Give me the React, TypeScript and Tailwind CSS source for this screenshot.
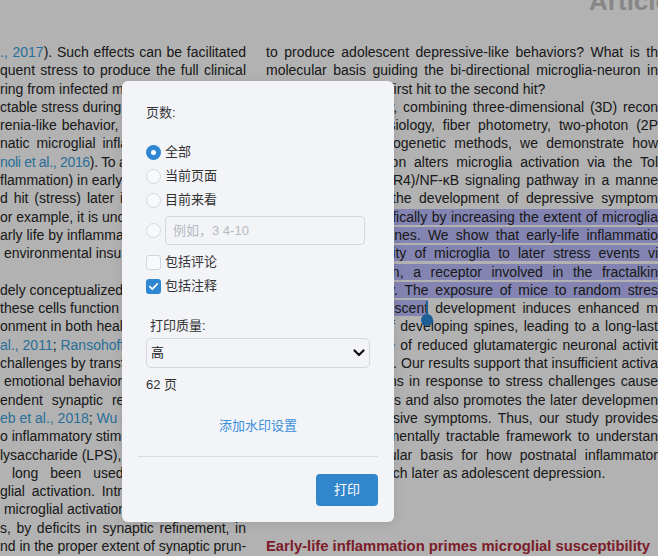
import React from "react";
import clsx from "clsx";

type Part = string | { text: string; kind: "link" | "mark" | "caret" };

interface Line {
  parts: Part[];
  justify?: boolean;
  extra?: string;
  noClip?: boolean;
}

const link = (text: string): Part => ({ text, kind: "link" });
const mark = (text: string): Part => ({ text, kind: "mark" });
const caret: Part = { text: "", kind: "caret" };

// left column: only the part left of the dialog is visible, so most lines are fragments
const leftLines: Line[] = [
  { parts: [link("., 2017"), "). Such effects can be facilitated"], justify: true },
  { parts: ["quent stress to produce the full clinical"], justify: true },
  { parts: ["ring from infected mothers and later"] },
  { parts: ["ctable stress during adolescence"] },
  { parts: ["renia-like behavior, and"], extra: "[word-spacing:1px]" },
  { parts: ["natic microglial inflammation"], extra: "[word-spacing:3px]" },
  { parts: [link("noli et al., 2016"), "). To address"], extra: "tracking-[-0.3px]" },
  { parts: ["flammation) in early life"] },
  { parts: ["d hit (stress) later in life"], extra: "[word-spacing:2px]" },
  { parts: ["or example, it is unclear"] },
  { parts: ["arly life by inflammation"] },
  { parts: ["\u00a0environmental insults"] },
  { parts: [] },
  { parts: ["dely conceptualized as"] },
  { parts: ["these cells function as"] },
  { parts: ["onment in both health"] },
  { parts: [link("al., 2011"), "; ", link("Ransohoff")] },
  { parts: ["challenges by transforming"] },
  { parts: ["\u00a0emotional behaviors"] },
  { parts: ["endent synaptic remodeling"], extra: "[word-spacing:5px]" },
  { parts: [link("eb et al., 2018"), "; ", link("Wu et al.")] },
  { parts: ["o inflammatory stimuli"] },
  { parts: ["lysaccharide (LPS),"] },
  { parts: ["\u00a0long been used in"], extra: "[word-spacing:8px]" },
  { parts: ["glial activation. Introducing"], extra: "[word-spacing:3px]" },
  { parts: ["\u00a0microglial activation"] },
  { parts: ["s, by deficits in synaptic refinement, in"], justify: true },
  { parts: ["nd in the proper extent of synaptic prun-"], justify: true, extra: "tracking-[-0.06px]" },
];

const rightLines: Line[] = [
  { parts: ["to produce adolescent depressive-like behaviors? What is th"], justify: true },
  { parts: ["molecular basis guiding the bi-directional microglia-neuron in"], justify: true },
  { parts: ["interaction from the first hit to the second hit?"] },
  { parts: ["Here, so specifically, combining three-dimensional (3D) recon"], justify: true },
  { parts: ["truction, electrophysiology, fiber photometry, two-photon (2P"], justify: true },
  { parts: ["imaging, and chemogenetic methods, we demonstrate how"], justify: true },
  { parts: ["early-life inflammation alters microglia activation via the Tol"], justify: true },
  { parts: ["l-like receptor 4 (TLR4)/NF-κB signaling pathway in a manne"], justify: true },
  { parts: ["that contributes to the development of depressive symptom"], justify: true },
  { parts: ["later on in life, ", mark("specifically by increasing the extent of microglia")], justify: true },
  { parts: [mark("of new synaptic spines. We show that early-life inflammatio")], justify: true },
  { parts: [mark("increase susceptibility of microglia to later stress events vi")], justify: true },
  { parts: [mark("CX3CR1's activation, a receptor involved in the fractalkin")], justify: true },
  { parts: [mark("e signaling pathway. The exposure of mice to random stres")], justify: true },
  { parts: [mark("events during adolescent"), caret, " development induces enhanced m"], justify: true, noClip: true },
  { parts: ["microglial pruning of developing spines, leading to a long-last"], justify: true },
  { parts: ["lasting consequence of reduced glutamatergic neuronal activit"], justify: true },
  { parts: ["y in adolescent mice. Our results support that insufficient activa"], justify: true },
  { parts: ["of microglial functions in response to stress challenges cause"], justify: true },
  { parts: ["fewer synaptic spines and also promotes the later developmen"], justify: true },
  { parts: ["the onset of depressive symptoms. Thus, our study provides"], justify: true },
  { parts: ["a novel and experimentally tractable framework to understan"], justify: true },
  { parts: ["d the exact molecular basis for how postnatal inflammator"], justify: true },
  { parts: ["y events emerge much later as adolescent depression."] },
  { parts: [] },
  { parts: [] },
  { parts: [] },
  {
    parts: ["Early-life inflammation primes microglial susceptibility"],
    extra: "font-bold text-[14.8px] text-[#b22a3a]",
  },
];

function TextLine({ line }: { line: Line }) {
  return (
    <div
      className={clsx(
        "h-[18.3px]",
        !line.noClip && "overflow-hidden",
        line.justify ? "text-justify [text-align-last:justify]" : "whitespace-nowrap",
        line.extra
      )}
    >
      {line.parts.map((p, i) => {
        if (typeof p === "string") return <React.Fragment key={i}>{p}</React.Fragment>;
        if (p.kind === "link")
          return (
            <span key={i} className="text-[#3aa0dc]">
              {p.text}
            </span>
          );
        if (p.kind === "mark")
          return (
            <span key={i} className="bg-[#bcbdff]">
              {p.text}
            </span>
          );
        // text selection caret with its drag handle
        return (
          <span key={i} className="relative inline-block h-0 w-0">
            <span className="absolute left-[-2px] top-[-12px] h-[14px] w-[2px] bg-[#2b88d8]" />
            <span className="absolute left-[-7px] top-[1px] size-[12px] rounded-full bg-[#2b88d8]" />
          </span>
        );
      })}
    </div>
  );
}

function Radio({ checked }: { checked?: boolean }) {
  if (checked)
    return (
      <span className="flex size-[15px] shrink-0 items-center justify-center rounded-full bg-[#2f86d2]">
        <span className="size-[5px] rounded-full bg-white" />
      </span>
    );
  return <span className="size-[15px] shrink-0 rounded-full border border-[#d5d8de] bg-[#f8f9fb]" />;
}

function Checkbox({ checked }: { checked?: boolean }) {
  if (checked)
    return (
      <span className="flex size-[15px] shrink-0 items-center justify-center rounded-[3px] bg-[#2f86d2]">
        <svg viewBox="0 0 15 15" className="size-[15px]">
          <path
            d="M3.8 7.6l2.5 2.5 5-5.2"
            fill="none"
            stroke="white"
            strokeWidth="1.7"
            strokeLinecap="round"
            strokeLinejoin="round"
          />
        </svg>
      </span>
    );
  return <span className="size-[15px] shrink-0 rounded-[3px] border border-[#d2d6dc] bg-[#f8f9fb]" />;
}

function PrintDialog() {
  return (
    <div className="absolute left-[122px] top-[81px] w-[272px] rounded-[6px] bg-[#f2f4f8] pb-[16px] pt-[23px] font-['Liberation_Sans','Noto_Sans_CJK_SC',sans-serif] text-[13px] leading-[18px] text-[#333] shadow-[0_2px_12px_rgba(0,0,0,0.1)]">
      <div className="px-6">
        <div className="h-[18px]">页数:</div>

        <div className="mt-[18px] flex flex-col">
          <div className="flex h-[24px] items-center gap-[4px]">
            <Radio checked />
            <span>全部</span>
          </div>
          <div className="flex h-[24px] items-center gap-[4px]">
            <Radio />
            <span>当前页面</span>
          </div>
          <div className="flex h-[24px] items-center gap-[4px]">
            <Radio />
            <span>目前来看</span>
          </div>
          <div className="mt-[4px] flex h-[29px] items-center gap-[4px]">
            <Radio />
            <div className="flex h-[29px] w-[200px] items-center rounded-[4px] border border-[#d3d7dd] px-[7px] text-[#b6bac1]">
              例如，3 4-10
            </div>
          </div>
          <div className="mt-[5px] flex h-[24px] items-center gap-[4px]">
            <Checkbox />
            <span>包括评论</span>
          </div>
          <div className="flex h-[24px] items-center gap-[4px]">
            <Checkbox checked />
            <span>包括注释</span>
          </div>
        </div>

        <div className="mt-[19px] h-[18px] pl-[4px]">打印质量:</div>
        <div className="mt-[3px] flex h-[30px] items-center justify-between rounded-[5px] border border-[#d3d7dd] pl-[4px] pr-[4px] text-[#222]">
          <span>高</span>
          <svg viewBox="0 0 12 8" className="h-[8px] w-[12px]">
            <path d="M1.5 1.5L6 6l4.5-4.5" fill="none" stroke="#111" strokeWidth="2.2" strokeLinecap="round" strokeLinejoin="round" />
          </svg>
        </div>

        <div className="mt-[8px] h-[18px]">62 页</div>
        <div className="mt-[23px] h-[18px] text-center text-[#3b8fd9]">添加水印设置</div>
      </div>

      <div className="mx-4 mt-[21px] h-px bg-[#d8dbe0]" />

      <div className="mt-[17px] flex justify-end px-4">
        <button className="h-[32px] w-[62px] rounded-[4px] bg-[#3186cc] text-[13px] text-white">打印</button>
      </div>
    </div>
  );
}

export default function App() {
  return (
    <div className="relative h-[556px] w-[658px] overflow-hidden bg-white font-['Liberation_Sans',sans-serif] text-[14px] leading-[18.3px] text-[#262626]">
      {/* article page behind the dialog */}
      <div className="-mr-[12px] flex h-[43px] justify-end">
        <span className="-mt-[12px] block whitespace-nowrap text-[26px] font-bold leading-none text-[#c2c2c2]">
          Article
        </span>
      </div>
      <div className="flex gap-[20px]">
        <div className="flex w-[246px] shrink-0 flex-col">
          {leftLines.map((l, i) => (
            <TextLine key={i} line={l} />
          ))}
        </div>
        <div className="flex w-[392px] shrink-0 flex-col">
          {rightLines.map((l, i) => (
            <TextLine key={i} line={l} />
          ))}
        </div>
      </div>

      <div className="absolute inset-0 bg-black/30" />
      <PrintDialog />
    </div>
  );
}
